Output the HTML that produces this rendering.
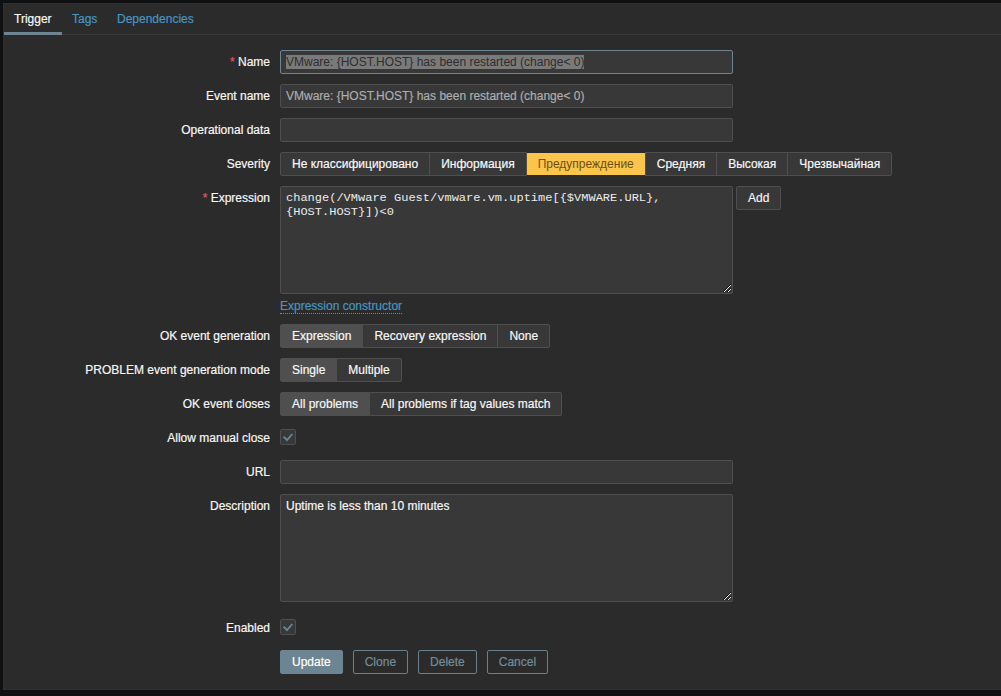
<!DOCTYPE html>
<html><head><meta charset="utf-8">
<style>
*{box-sizing:border-box;margin:0;padding:0}
html,body{width:1001px;height:696px;overflow:hidden;background:#0e1012}
body{font-family:"Liberation Sans",sans-serif;font-size:12px;color:#f8f8f8;position:relative;line-height:14px;-webkit-text-stroke:0.18px}
.panel{position:absolute;left:3px;top:3px;width:1000px;height:687px;background:#2b2b2b;border:1px solid #303030}
.tabline{position:absolute;left:4px;top:34px;width:997px;height:1px;background:#383838}
.tabsel{position:absolute;left:4px;top:32px;width:58px;height:3px;background:#6d8492}
.t{position:absolute;white-space:nowrap;line-height:14px}
.lbl{position:absolute;left:0;width:270px;text-align:right;white-space:nowrap;line-height:14px}
.a{color:#4796c4}
.req{color:#e45959}
.in{position:absolute;left:280px;width:453px;height:24px;background:#383838;border:1px solid #4f4f4f;border-radius:2px}
.in .v{position:absolute;left:5px;top:4px;line-height:14px;white-space:nowrap;color:#adadad}
.ta{position:absolute;left:280px;width:453px;height:108px;background:#383838;border:1px solid #4f4f4f;border-radius:2px}
.mono{font-family:"Liberation Mono",monospace;font-size:12px}
.ml{color:#ececec;-webkit-text-stroke:0;transform:scaleY(0.88);transform-origin:0 10.2px}
.seg{position:absolute;left:280px;height:24px;display:flex;white-space:nowrap}
.seg div{flex:none;height:24px;line-height:22px;padding:0 11px;border:1px solid #4f4f4f;background:#383838;margin-left:-1px;position:relative}
.seg div:first-child{margin-left:0;border-radius:2px 0 0 2px}
.seg div:last-child{border-radius:0 2px 2px 0}
.seg .on{background:#4f4f4f}
.seg .warn{background:#fbc54c;color:#6b5212;border-color:transparent;background-clip:padding-box;-webkit-text-stroke:0}
.cb{position:absolute;left:280px;width:16px;height:16px;background:#383838;border:1px solid #4f4f4f;border-radius:2px}
.cb svg{position:absolute;left:-1px;top:-1px}
.btn{flex:none;height:24px;line-height:22px;padding:0 11px;border:1px solid #69808d;border-radius:2px;color:#768d99;margin-right:10px;white-space:nowrap}
.btns{position:absolute;left:280px;top:650px;display:flex}
.btn.p{background:#6d8492;color:#fff;border-color:#6d8492}
</style></head><body>
<div class="panel"></div>
<div class="tabline"></div><div class="tabsel"></div>
<div class="t" style="left:14px;top:12px">Trigger</div>
<div class="t a" style="left:72px;top:12px">Tags</div>
<div class="t a" style="left:117px;top:12px">Dependencies</div>

<div class="lbl" style="top:55px"><span class="req">*</span> Name</div>
<div class="in" style="top:50px;border-color:#6d8492"><div class="v" style="background:#7a7a7a;color:#2e2e2e;width:298px;-webkit-text-stroke:0">VMware: {HOST.HOST} has been restarted (change&lt; 0)</div></div>

<div class="lbl" style="top:89px">Event name</div>
<div class="in" style="top:84px"><div class="v">VMware: {HOST.HOST} has been restarted (change&lt; 0)</div></div>

<div class="lbl" style="top:123px">Operational data</div>
<div class="in" style="top:118px"></div>

<div class="lbl" style="top:157px">Severity</div>
<div class="seg" style="top:152px">
<div>Не классифицировано</div><div>Информация</div><div class="warn">Предупреждение</div><div>Средняя</div><div>Высокая</div><div>Чрезвычайная</div></div>

<div class="lbl" style="top:191px"><span class="req">*</span> Expression</div>
<div class="ta mono" style="top:186px"><div class="t ml" style="left:5px;top:4px">change(/VMware Guest/vmware.vm.uptime[{$VMWARE.URL},</div><div class="t ml" style="left:5px;top:18px">{HOST.HOST}])&lt;0</div>
<svg width="8" height="8" shape-rendering="crispEdges" style="position:absolute;left:442px;top:97px"><rect x="0" y="7" width="1" height="1" fill="#111"/><rect x="1" y="6" width="1" height="1" fill="#111"/><rect x="2" y="5" width="1" height="1" fill="#111"/><rect x="3" y="4" width="1" height="1" fill="#111"/><rect x="4" y="3" width="1" height="1" fill="#111"/><rect x="5" y="2" width="1" height="1" fill="#111"/><rect x="6" y="1" width="1" height="1" fill="#111"/><rect x="7" y="0" width="1" height="1" fill="#111"/><rect x="4" y="7" width="1" height="1" fill="#111"/><rect x="5" y="6" width="1" height="1" fill="#111"/><rect x="6" y="5" width="1" height="1" fill="#111"/><rect x="7" y="4" width="1" height="1" fill="#111"/><rect x="1" y="7" width="1" height="1" fill="#e6e6e6"/><rect x="2" y="6" width="1" height="1" fill="#e6e6e6"/><rect x="3" y="5" width="1" height="1" fill="#e6e6e6"/><rect x="4" y="4" width="1" height="1" fill="#e6e6e6"/><rect x="5" y="3" width="1" height="1" fill="#e6e6e6"/><rect x="6" y="2" width="1" height="1" fill="#e6e6e6"/><rect x="7" y="1" width="1" height="1" fill="#e6e6e6"/><rect x="5" y="7" width="1" height="1" fill="#e6e6e6"/><rect x="6" y="6" width="1" height="1" fill="#e6e6e6"/><rect x="7" y="5" width="1" height="1" fill="#e6e6e6"/></svg></div>
<div class="btn" style="position:absolute;left:736px;top:186px;background:#383838;border-color:#4f4f4f;color:#f2f2f2">Add</div>
<div class="t a" style="left:280px;top:299px;border-bottom:1px dotted #4796c4;line-height:14px">Expression constructor</div>

<div class="lbl" style="top:329px">OK event generation</div>
<div class="seg" style="top:324px"><div class="on">Expression</div><div>Recovery expression</div><div>None</div></div>

<div class="lbl" style="top:363px">PROBLEM event generation mode</div>
<div class="seg" style="top:358px"><div class="on">Single</div><div>Multiple</div></div>

<div class="lbl" style="top:397px">OK event closes</div>
<div class="seg" style="top:392px"><div class="on">All problems</div><div>All problems if tag values match</div></div>

<div class="lbl" style="top:431px">Allow manual close</div>
<div class="cb" style="top:429px"><svg width="16" height="16"><path d="M3.6 7.7L7 11.1L12.3 5" fill="none" stroke="#6b8392" stroke-width="1.9"/></svg></div>

<div class="lbl" style="top:465px">URL</div>
<div class="in" style="top:460px"></div>

<div class="lbl" style="top:499px">Description</div>
<div class="ta" style="top:494px"><div class="t" style="left:5px;top:4px">Uptime is less than 10 minutes</div>
<svg width="8" height="8" shape-rendering="crispEdges" style="position:absolute;left:442px;top:97px"><rect x="0" y="7" width="1" height="1" fill="#111"/><rect x="1" y="6" width="1" height="1" fill="#111"/><rect x="2" y="5" width="1" height="1" fill="#111"/><rect x="3" y="4" width="1" height="1" fill="#111"/><rect x="4" y="3" width="1" height="1" fill="#111"/><rect x="5" y="2" width="1" height="1" fill="#111"/><rect x="6" y="1" width="1" height="1" fill="#111"/><rect x="7" y="0" width="1" height="1" fill="#111"/><rect x="4" y="7" width="1" height="1" fill="#111"/><rect x="5" y="6" width="1" height="1" fill="#111"/><rect x="6" y="5" width="1" height="1" fill="#111"/><rect x="7" y="4" width="1" height="1" fill="#111"/><rect x="1" y="7" width="1" height="1" fill="#e6e6e6"/><rect x="2" y="6" width="1" height="1" fill="#e6e6e6"/><rect x="3" y="5" width="1" height="1" fill="#e6e6e6"/><rect x="4" y="4" width="1" height="1" fill="#e6e6e6"/><rect x="5" y="3" width="1" height="1" fill="#e6e6e6"/><rect x="6" y="2" width="1" height="1" fill="#e6e6e6"/><rect x="7" y="1" width="1" height="1" fill="#e6e6e6"/><rect x="5" y="7" width="1" height="1" fill="#e6e6e6"/><rect x="6" y="6" width="1" height="1" fill="#e6e6e6"/><rect x="7" y="5" width="1" height="1" fill="#e6e6e6"/></svg></div>

<div class="lbl" style="top:621px">Enabled</div>
<div class="cb" style="top:619px"><svg width="16" height="16"><path d="M3.6 7.7L7 11.1L12.3 5" fill="none" stroke="#6b8392" stroke-width="1.9"/></svg></div>

<div class="btns"><div class="btn p">Update</div><div class="btn">Clone</div><div class="btn">Delete</div><div class="btn">Cancel</div></div>
</body></html>
